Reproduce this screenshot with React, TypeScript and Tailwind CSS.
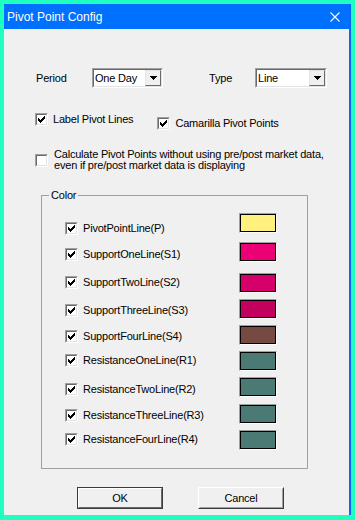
import React from 'react';

const FONT = { fontFamily: '"Liberation Sans", Arial, sans-serif' };

const ROWS = [
  { label: 'PivotPointLine(P)', color: 'bg-[#fff080]', mt: 'mt-[11px]', chk: 'mt-[9px]' },
  { label: 'SupportOneLine(S1)', color: 'bg-[#eb0075]', mt: 'mt-[9px]', chk: 'mt-[6px]' },
  { label: 'SupportTwoLine(S2)', color: 'bg-[#d6006b]', mt: 'mt-[11px]', chk: 'mt-[3px]' },
  { label: 'SupportThreeLine(S3)', color: 'bg-[#c2005e]', mt: 'mt-[6px]', chk: 'mt-[5px]' },
  { label: 'SupportFourLine(S4)', color: 'bg-[#744a42]', mt: 'mt-[6px]', chk: 'mt-[5px]' },
  { label: 'ResistanceOneLine(R1)', color: 'bg-[#4b7a74]', mt: 'mt-[6px]', chk: 'mt-[3px]' },
  { label: 'ResistanceTwoLine(R2)', color: 'bg-[#4b7a74]', mt: 'mt-[6px]', chk: 'mt-[6px]' },
  { label: 'ResistanceThreeLine(R3)', color: 'bg-[#4b7a74]', mt: 'mt-[7px]', chk: 'mt-[5px]' },
  { label: 'ResistanceFourLine(R4)', color: 'bg-[#4b7a74]', mt: 'mt-[6px]', chk: 'mt-[3px]' },
];

// classic 13x13 sunken check box
function CheckBox({ checked }: { checked: boolean }) {
  return (
    <div className="w-[13px] h-[13px] shrink-0 border border-t-[#a0a0a0] border-l-[#a0a0a0] border-r-white border-b-white">
      <div className="w-full h-full bg-white border border-t-[#696969] border-l-[#696969] border-r-[#e3e3e3] border-b-[#e3e3e3]">
        {checked && (
          <svg width="7" height="7" viewBox="0 0 7 7" className="ml-[1px] mt-[1px]" shapeRendering="crispEdges">
            <rect x="0" y="2" width="1" height="3" fill="#000" />
            <rect x="1" y="3" width="1" height="3" fill="#000" />
            <rect x="2" y="4" width="1" height="3" fill="#000" />
            <rect x="3" y="3" width="1" height="3" fill="#000" />
            <rect x="4" y="2" width="1" height="3" fill="#000" />
            <rect x="5" y="1" width="1" height="3" fill="#000" />
            <rect x="6" y="0" width="1" height="3" fill="#000" />
          </svg>
        )}
      </div>
    </div>
  );
}

function Combo({ value, width }: { value: string; width: string }) {
  return (
    <div className={`${width} h-[20px] border border-t-[#a0a0a0] border-l-[#a0a0a0] border-r-white border-b-white`}>
      <div className="h-full flex bg-white border border-t-[#696969] border-l-[#696969] border-r-[#e3e3e3] border-b-[#e3e3e3]">
        <div className="flex-1 pl-[1px] leading-[16px]">{value}</div>
        <div className="w-[16px] h-[16px] bg-[#f0f0f0] border border-t-[#e3e3e3] border-l-[#e3e3e3] border-r-[#696969] border-b-[#696969] flex items-center justify-center">
          <svg width="7" height="4" viewBox="0 0 7 4" shapeRendering="crispEdges">
            <path d="M0 0h7v1h-1v1h-1v1h-1v1h-1v-1h-1v-1h-1v-1h-1z" fill="#000" />
          </svg>
        </div>
      </div>
    </div>
  );
}

function Button({ label, isDefault }: { label: string; isDefault?: boolean }) {
  return (
    <div className={`w-[86px] h-[22px] ${isDefault ? 'border border-[#3c3c3c]' : 'border border-t-white border-l-white border-r-[#3c3c3c] border-b-[#3c3c3c]'}`}>
      <div className={`h-full flex items-center justify-center bg-[#f0f0f0] border ${isDefault ? 'border-t-white border-l-white border-r-[#696969] border-b-[#696969]' : 'border-t-[#f0f0f0] border-l-[#f0f0f0] border-r-[#a0a0a0] border-b-[#a0a0a0]'}`}>
        {label}
      </div>
    </div>
  );
}

export default function App() {
  return (
    <div className="w-[355px] h-[520px] bg-[#1effc0] pt-[4px] pl-[4px] pr-[4px] pb-[5px]" style={FONT}>
      <div className="h-full flex flex-col bg-[#f0f0f0] border-r-2 border-[#0a64ff]">
        {/* title bar */}
        <div className="h-[25px] shrink-0 bg-[#0070ff] flex items-center justify-between pl-[3px] pr-[9px]">
          <span className="text-white text-[12px] leading-none">Pivot Point Config</span>
          <svg width="10" height="10" viewBox="0 0 10 10">
            <path d="M0.5 0.5L9.5 9.5M9.5 0.5L0.5 9.5" stroke="#fff" strokeWidth="1.1" />
          </svg>
        </div>

        <div className="flex-1 flex flex-col text-[11px] tracking-[-0.2px] text-black">
          {/* period / type */}
          <div className="mt-[39px] flex items-center h-[20px]">
            <span className="ml-[32px] w-[56px]">Period</span>
            <Combo value="One Day" width="w-[71px]" />
            <span className="ml-[46px] w-[46px]">Type</span>
            <Combo value="Line" width="w-[72px]" />
          </div>

          {/* checkboxes */}
          <div className="mt-[25px] flex items-start">
            <div className="ml-[31px] flex items-center h-[13px]">
              <CheckBox checked />
              <span className="ml-[5px]">Label Pivot Lines</span>
            </div>
            <div className="ml-[24px] mt-[4px] flex items-center h-[13px]">
              <CheckBox checked />
              <span className="ml-[5px]">Camarilla Pivot Points</span>
            </div>
          </div>

          <div className="mt-[18px] ml-[31px] flex items-center h-[24px]">
            <CheckBox checked={false} />
            <div className="ml-[6px] leading-[11px] whitespace-nowrap">
              <div>Calculate Pivot Points without using pre/post market data,</div>
              <div>even if pre/post market data is displaying</div>
            </div>
          </div>

          {/* color group */}
          <fieldset className="mt-[17px] ml-[37px] w-[267px] h-[280px] border border-[#a0a0a0]">
            <legend className="ml-[7px] px-[2px] leading-[13px]">Color</legend>
            {ROWS.map((r) => (
              <div key={r.label} className={`${r.mt} flex items-start h-[20px] pl-[23px]`}>
                <div className={`${r.chk} flex items-center h-[13px]`}>
                  <CheckBox checked />
                  <span className="ml-[5px] w-[156px] whitespace-nowrap">{r.label}</span>
                </div>
                <div className="w-[38px] h-[20px] border border-t-[#a0a0a0] border-l-[#a0a0a0] border-r-white border-b-white">
                  <div className={`w-full h-full border border-black ${r.color}`} />
                </div>
              </div>
            ))}
          </fieldset>

          {/* buttons */}
          <div className="mt-[18px] ml-[73px] flex gap-[35px]">
            <Button label="OK" isDefault />
            <Button label="Cancel" />
          </div>
        </div>
      </div>
    </div>
  );
}
